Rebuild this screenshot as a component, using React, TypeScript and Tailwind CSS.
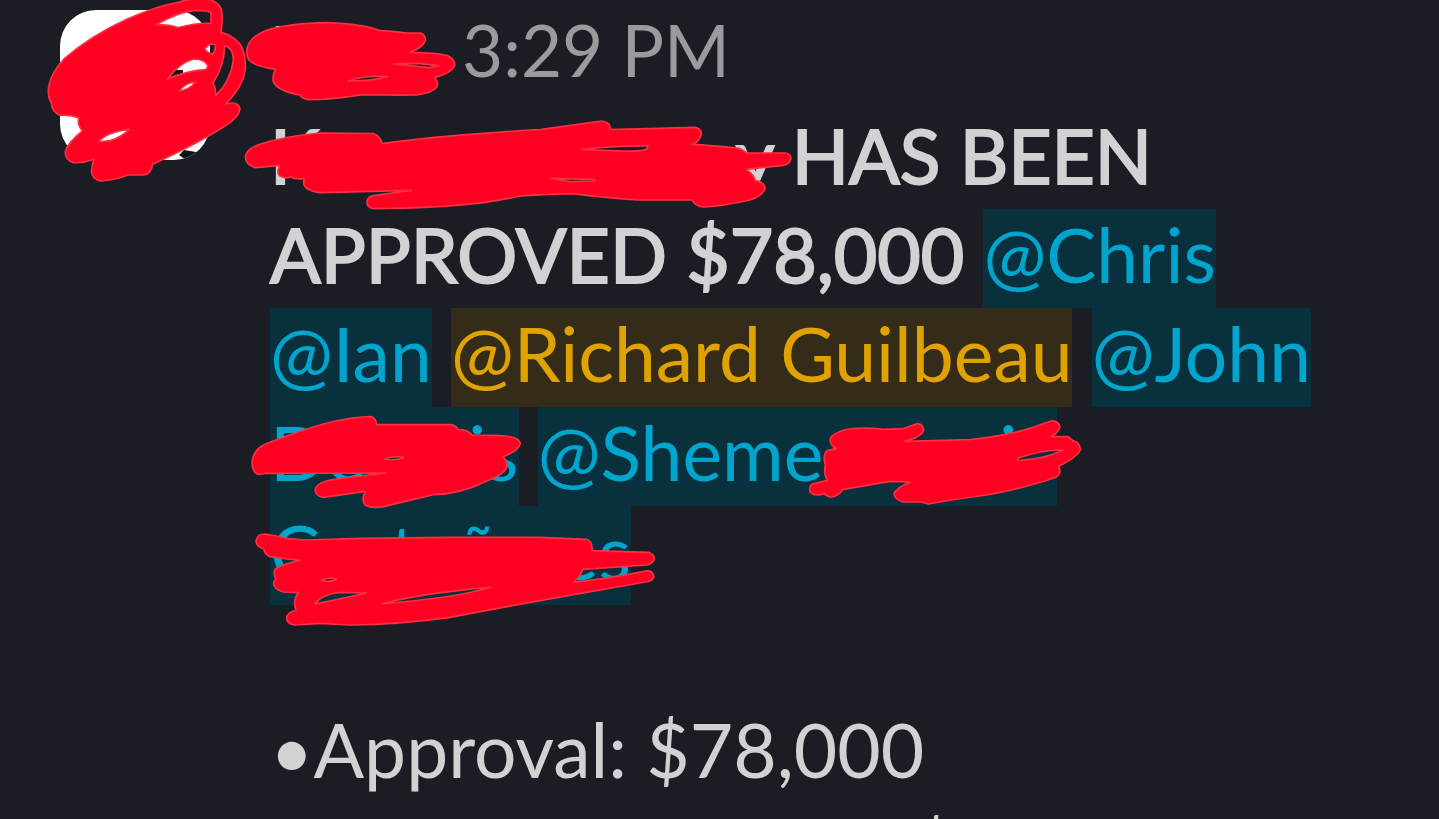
import type { ReactNode } from "react";

type ScribbleProps = { x: number; y: number; d: string };

const scribbles: ScribbleProps[] = [
  // avatar
  {
    x: 30,
    y: 0,
    d: "M64 308Q52 290 56 260Q64 217 102 177Q182 107 292 57Q382 17 450 6Q470 -3 520 -3Q558 -3 573 25Q580 50 573 97Q610 107 630 132Q648 160 646 205Q640 260 586 312Q623 302 630 325Q628 350 588 376Q518 423 368 493Q363 523 340 525L295 525Q260 538 215 543Q182 538 185 510Q187 490 192 478Q160 490 130 488Q105 480 106 455Q112 430 157 393Q140 370 147 354Q120 343 90 346Q64 333 64 308ZM378 74Q450 34 497 31Q543 31 543 42L543 70Q500 68 445 83Q420 74 378 74ZM525 145L540 132L556 134Q558 152 548 163Q528 157 525 145ZM412 237Q448 190 490 177Q522 177 533 195Q533 208 525 209Q470 213 412 237ZM584 136Q611 146 610 180Q603 242 558 286Q556 262 549 248Q583 200 584 136ZM205 426Q228 396 298 388Q274 412 240 422ZM448 273Q468 247 497 246Q477 270 448 273Z",
  },
  // sender
  {
    x: 230,
    y: 0,
    d: "M50 155Q52 112 112 90Q180 70 290 68Q400 72 450 92Q500 95 530 99L570 99Q588 104 586 122Q578 143 540 157Q620 158 653 167Q676 177 674 197Q663 220 613 233Q628 250 620 262Q608 278 560 285Q480 286 400 284Q320 296 270 298L235 299Q217 296 209 285Q142 273 130 245Q126 225 137 208Q72 198 57 180Q50 170 50 155ZM354 243Q400 225 473 230Q424 244 354 243ZM492 192L560 190L626 197L598 203Z",
  },
  // first line
  {
    x: 230,
    y: 110,
    d: "M46 140Q48 117 92 102Q160 80 270 69L430 71Q450 77 456 101Q560 87 640 80Q780 68 900 60L930 59Q1020 46 1115 33Q1143 36 1141 59L1395 52Q1416 57 1414 72Q1408 95 1388 103Q1500 110 1530 116L1552 129L1665 129Q1684 132 1683 147Q1678 163 1660 166L1549 178Q1573 195 1576 212Q1606 217 1605 238Q1593 260 1560 270Q1480 288 1420 291Q1394 288 1387 270L1220 270Q1120 263 1030 251Q960 252 870 258Q830 268 760 278Q620 295 430 296Q410 292 411 274Q414 258 435 256L545 241L270 248Q227 243 221 222L222 205Q200 210 180 200Q165 208 147 196Q140 185 149 166Q110 170 75 173Q47 163 46 140ZM1055 119Q1130 109 1254 107L1250 117Q1240 125 1180 123ZM962 205L1090 208L1095 213L1020 215Z",
  },
  // mentions
  {
    x: 240,
    y: 400,
    d: "M36 190Q38 147 82 130Q180 92 250 72Q340 50 395 50Q410 57 409 74L630 74Q648 76 655 89Q685 89 696 105L780 107Q838 110 841 130Q836 153 789 170Q803 185 800 202Q793 223 740 243Q660 283 580 284Q500 303 430 320Q395 326 377 316Q362 300 376 274L250 292Q224 288 226 268Q232 244 290 237L438 219L75 220Q55 228 44 216Q36 205 36 190ZM432 177Q465 165 492 173Q465 183 432 177Z",
  },
  {
    x: 780,
    y: 400,
    d: "M150 120Q152 102 192 90Q240 80 310 88L370 86L410 71Q430 72 431 90Q428 110 375 124L570 119Q680 107 760 82L815 62Q836 64 840 80Q836 98 814 110L865 110L878 122Q901 127 901 150Q893 170 836 199Q846 220 828 232Q740 263 620 285Q520 298 445 312L425 306L370 306Q344 298 342 282Q347 264 390 246L330 244L190 268Q170 293 150 291Q138 288 132 281Q105 290 92 278Q84 262 97 252L143 241Q130 225 136 195Q127 165 142 152L169 146Q152 138 150 120ZM712 175Q780 150 850 150Q800 176 716 182Z",
  },
  {
    x: 240,
    y: 510,
    d: "M48 92Q52 72 75 72Q110 77 145 86L200 90L360 85L630 82L900 82Q950 84 1040 88Q1058 94 1056 122L1225 127Q1244 134 1243 148Q1238 162 1220 165L1029 178Q1021 200 1000 217Q1100 207 1225 182Q1242 187 1241 202Q1236 214 1215 216L1090 238Q860 278 630 322Q480 343 330 345L240 340L165 345Q140 343 140 322Q144 307 168 300Q157 270 176 248L130 246Q100 238 101 218L107 205Q100 190 104 180Q112 167 180 151Q110 143 90 140Q74 133 72 118Q48 108 48 92ZM224 282Q246 252 300 247L380 249Q314 264 224 282ZM426 281Q560 247 752 232Q645 265 426 281ZM244 212Q265 199 290 208Q270 218 244 212Z",
  },
];

function Marker() {
  return (
    <svg
      className="absolute left-0 top-0 pointer-events-none"
      width="1439"
      height="819"
      viewBox="0 0 1439 819"
      aria-hidden="true"
    >
      {scribbles.map((s) => (
        <path
          key={`${s.x}-${s.y}`}
          d={s.d}
          transform={`translate(${s.x} ${s.y}) scale(0.3333)`}
          fill="#ff0023"
          fillRule="evenodd"
          stroke="#ff2f42"
          strokeWidth="5"
          strokeLinejoin="round"
        />
      ))}
    </svg>
  );
}

function Avatar() {
  return (
    <svg className="mt-[2px] size-[150px] shrink-0 rounded-[36px] bg-white" viewBox="0 0 150 150" aria-hidden="true">
      <path d="M108 60H123V77H108ZM119 145L124 140L142 143L126 150Z" fill="#111417" />
    </svg>
  );
}

function Mention({ me = false, children }: { me?: boolean; children: ReactNode }) {
  return (
    <a
      href="#"
      className={me ? "bg-[#342c19] pb-[9px] text-[#dfa200]" : "bg-[#08303d] pb-[9px] text-[#00a5ce]"}
    >
      {children}
    </a>
  );
}

export default function App() {
  return (
    <div className="relative h-screen overflow-hidden bg-[#1a1e24] font-['Lato',sans-serif] text-[#d1d2d4]">
      <article className="flex items-start gap-[60px] pl-[60px] pr-12 pt-2">
        <Avatar />
        <div className="min-w-0 flex-1">
          <header className="flex items-baseline text-[71px] leading-[84px]">
            <span className="w-48 font-bold">E</span>
            <time className="text-[#9a9b9e]">3:29 PM</time>
          </header>
          <div className="mt-[14px] text-[75px] leading-[99px]">
            <p>
              <span className="[-webkit-text-stroke:2px_#d1d2d4]">
                <span className="whitespace-nowrap">
                  K<span className="inline-block w-[416px]" />y
                </span>{" "}
                HAS BEEN APPROVED $78,000
              </span>{" "}
              <Mention>@Chris</Mention> <Mention>@Ian</Mention>{" "}
              <Mention me>@Richard Guilbeau</Mention>{" "}
              <Mention>
                @John{" "}
                <span className="whitespace-nowrap">
                  De
                  <span className="inline-block w-[102px]" />
                  is
                </span>
              </Mention>{" "}
              <Mention>
                <span className="whitespace-nowrap">
                  @Sheme
                  <span className="inline-block w-44" />
                  i<span className="inline-block w-10" />
                </span>{" "}
                <span className="whitespace-nowrap">
                  C<span className="inline-block w-[70px]" />t
                  <span className="inline-block w-10" />ñ
                  <span className="inline-block w-[60px]" />
                  es
                </span>
              </Mention>
            </p>
            <ul className="mt-[99px]">
              <li>•Approval: $78,000</li>
              <li className="whitespace-nowrap">
                •<span className="inline-block w-[598px]" />$
              </li>
            </ul>
          </div>
        </div>
      </article>
      <Marker />
    </div>
  );
}
